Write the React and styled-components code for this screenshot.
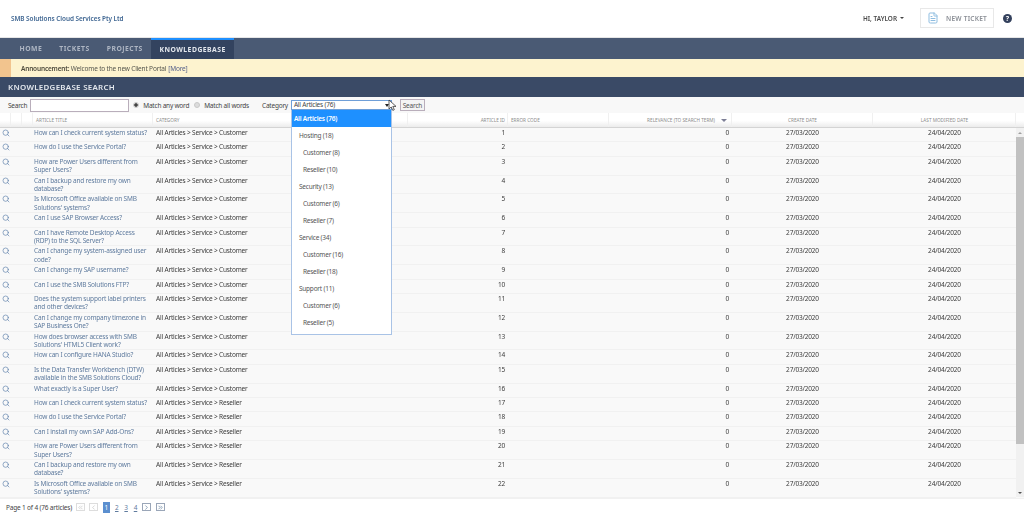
import React from "react";
import styled, { createGlobalStyle } from "styled-components";
import { Search as SearchIcon, FileText, ChevronLeft, ChevronRight, ChevronsLeft, ChevronsRight } from "lucide-react";

const FONT = `"Noto Sans", "Open Sans", sans-serif`;

const GlobalStyle = createGlobalStyle`
  html, body { margin: 0; padding: 0; height: 100%; overflow: hidden; background: #fff; }
  body { font-family: ${FONT}; font-size: 6.5px; color: #333; }
  * { box-sizing: border-box; }
`;

const articles = [
  ["How can I check current system status?", "Customer"],
  ["How do I use the Service Portal?", "Customer"],
  ["How are Power Users different from Super Users?", "Customer"],
  ["Can I backup and restore my own database?", "Customer"],
  ["Is Microsoft Office available on SMB Solutions' systems?", "Customer"],
  ["Can I use SAP Browser Access?", "Customer"],
  ["Can I have Remote Desktop Access (RDP) to the SQL Server?", "Customer"],
  ["Can I change my system-assigned user code?", "Customer"],
  ["Can I change my SAP username?", "Customer"],
  ["Can I use the SMB Solutions FTP?", "Customer"],
  ["Does the system support label printers and other devices?", "Customer"],
  ["Can I change my company timezone in SAP Business One?", "Customer"],
  ["How does browser access with SMB Solutions' HTML5 Client work?", "Customer"],
  ["How can I configure HANA Studio?", "Customer"],
  ["Is the Data Transfer Workbench (DTW) available in the SMB Solutions Cloud?", "Customer"],
  ["What exactly is a Super User?", "Customer"],
  ["How can I check current system status?", "Reseller"],
  ["How do I use the Service Portal?", "Reseller"],
  ["Can I install my own SAP Add-Ons?", "Reseller"],
  ["How are Power Users different from Super Users?", "Reseller"],
  ["Can I backup and restore my own database?", "Reseller"],
  ["Is Microsoft Office available on SMB Solutions' systems?", "Reseller"],
];

const categories = [
  ["All Articles (76)", 0, true],
  ["Hosting (18)", 1],
  ["Customer (8)", 2],
  ["Reseller (10)", 2],
  ["Security (13)", 1],
  ["Customer (6)", 2],
  ["Reseller (7)", 2],
  ["Service (34)", 1],
  ["Customer (16)", 2],
  ["Reseller (18)", 2],
  ["Support (11)", 1],
  ["Customer (6)", 2],
  ["Reseller (5)", 2],
];

const Page = styled.div`
  width: 1024px;
  height: 517px;
  display: flex;
  flex-direction: column;
  overflow: hidden;
  filter: blur(0.2px);
`;

const Header = styled.header`
  height: 38px;
  flex: none;
  display: flex;
  align-items: center;
  padding: 0 12px 1px 11px;
  border-bottom: 1px solid #e6e6e6;
`;

const Brand = styled.div`
  font-size: 6.4px;
  font-weight: 600;
  letter-spacing: -0.05px;
  color: #3f6692;
  margin-right: auto;
`;

const User = styled.div`
  font-size: 6.4px;
  font-weight: 600;
  color: #4a4a4a;
  display: flex;
  align-items: center;
  gap: 3px;
  margin-right: 16px;
  &::after {
    content: "";
    border: 2px solid transparent;
    border-top: 2px solid #444;
    margin-top: 2px;
  }
`;

const NewTicket = styled.div`
  width: 74px;
  height: 20px;
  border: 1px solid #e8e8e8;
  display: flex;
  align-items: center;
  padding-left: 6px;
  gap: 7px;
  font-size: 6.6px;
  letter-spacing: 0.2px;
  color: #8b8f96;
  font-weight: 600;
  svg { color: #8fbde0; }
`;

const Help = styled.div`
  width: 9px;
  height: 9px;
  margin-left: 9px;
  border-radius: 50%;
  background: #33405c;
  color: #fff;
  font-size: 7px;
  font-weight: 700;
  line-height: 9px;
  text-align: center;
`;

const Nav = styled.nav`
  height: 21px;
  flex: none;
  background: #4a5a74;
  display: flex;
  padding-left: 11px;
`;

const NavItem = styled.div`
  height: 21px;
  padding: ${(p) => (p.$active ? "0 8px" : "0 8.5px")};
  display: flex;
  align-items: center;
  font-size: 6.8px;
  font-weight: 700;
  letter-spacing: 0.5px;
  color: ${(p) => (p.$active ? "#e4e8ee" : "#aeb6c3")};
  background: ${(p) => (p.$active ? "#33435f" : "transparent")};
  border-top: ${(p) => (p.$active ? "2px solid #1e90ff" : "0")};
`;

const Announcement = styled.div`
  height: 18px;
  flex: none;
  background: #fdf3cf;
  border-left: 11px solid #f2c48e;
  display: flex;
  align-items: center;
  padding-left: 10px;
  font-size: 6.5px;
  letter-spacing: -0.18px;
  color: #55554d;
  b { font-weight: 600; color: #4d4a3c; }
  span { color: #55608a; margin-left: 2px; }
`;

const TitleBar = styled.div`
  height: 20px;
  flex: none;
  background: #3a4a66;
  color: #e3e7ed;
  font-size: 7.9px;
  font-weight: 600;
  letter-spacing: 0.3px;
  display: flex;
  align-items: center;
  padding-left: 8px;
`;

const SearchRow = styled.div`
  height: 16px;
  flex: none;
  background: #f8f8f8;
  display: flex;
  align-items: center;
  padding-left: 8px;
  font-size: 6.5px;
  letter-spacing: -0.22px;
  color: #444;
  position: relative;
  z-index: 2;
`;

const TextInput = styled.div`
  width: 99px;
  height: 13px;
  margin-left: 3px;
  background: #fff;
  border: 1px solid #b9aebb;
`;

const RadioLabel = styled.label`
  display: flex;
  align-items: center;
  gap: 4px;
  margin-left: ${(p) => p.$gap}px;
`;

const Radio = styled.span`
  width: 6px;
  height: 6px;
  border-radius: 50%;
  background: ${(p) => (p.$on ? "radial-gradient(circle, #444 0 1.5px, #ddd 2px)" : "#dcdcdc")};
  border: 1px solid #c8c8c8;
`;

const SelectWrap = styled.div`
  position: relative;
  margin-left: 3px;
`;

const Select = styled.div`
  width: 101px;
  height: 10px;
  background: #fff;
  border: 1px solid #6f9fd8;
  padding-left: 2px;
  line-height: 8px;
  display: flex;
  justify-content: space-between;
  &::after {
    content: "";
    border: 2.2px solid transparent;
    border-top: 3px solid #222;
    margin: 2.5px 2px 0 0;
  }
`;

const Menu = styled.ul`
  position: absolute;
  top: 10px;
  left: 0;
  width: 101px;
  height: 225px;
  margin: 0;
  padding: 0;
  list-style: none;
  background: #fff;
  border: 1px solid #a9c3e6;
  border-top: 0;
`;

const MenuItem = styled.li`
  height: 17px;
  line-height: 17px;
  padding-left: ${(p) => [2, 7, 11][p.$level]}px;
  background: ${(p) => (p.$selected ? "#1e90ff" : "transparent")};
  color: ${(p) => (p.$selected ? "#fff" : "#555")};
  font-weight: ${(p) => (p.$selected ? 600 : 400)};
`;

const SearchButton = styled.button`
  margin-left: 8px;
  width: 25px;
  height: 12px;
  padding: 0;
  font: 6.5px ${FONT};
  letter-spacing: -0.18px;
  color: #555;
  background: #f4f4f4;
  border: 1px solid #b9aebb;
`;

const Cursor = styled.svg`
  position: absolute;
  left: 388px;
  top: 99px;
  z-index: 3;
`;

const TableArea = styled.div`
  flex: 1;
  min-height: 0;
  display: flex;
  flex-direction: column;
  overflow: hidden;
  background: #f9f9f9;
`;

const HeaderRow = styled.div`
  height: 15px;
  flex: none;
  display: grid;
  grid-template-columns: 11px 11px 11px 120px 255px 100px 101px 123px 141px 143px 8px;
  background: linear-gradient(#fff 55%, #ececec);
  border-bottom: 1px solid #d4d4d4;
`;

const HeadCell = styled.div`
  font-size: 4.7px;
  color: #8b8b8b;
  display: flex;
  align-items: center;
  justify-content: ${(p) => p.$justify || "flex-start"};
  padding: 0 2px 0 3px;
  border-right: 1px solid #f0f0f0;
`;

const SortMark = styled.span`
  margin-left: 6px;
  margin-right: 2px;
  margin-top: 1px;
  border: 3px solid transparent;
  border-top: 3px solid #7d7f96;
  border-bottom: 0;
`;

const Body = styled.div`
  flex: 1;
  min-height: 0;
  display: flex;
  overflow: hidden;
`;

const Rows = styled.div`
  width: 1016px;
  height: 370px;
  overflow: hidden;
`;

const Row = styled.div`
  display: grid;
  grid-template-columns: 33px 120px 255px 100px 101px 123px 141px 143px;
  min-height: 14.4px;
  padding-top: 1px;
  border-bottom: 1px solid #f1f1f1;
  line-height: 8.4px;
  font-size: 6.5px;
  letter-spacing: -0.18px;
  color: #3b3b3b;
`;

const Cell = styled.div`
  text-align: ${(p) => p.$align || "left"};
  padding: 0 ${(p) => (p.$align === "right" ? "3px" : "0")} 0 ${(p) => (p.$pad ? p.$pad : 0)}px;
`;

const TitleCell = styled.div`
  color: #5f7b9e;
  padding: 0 2px 0 1px;
`;

const Magnifier = styled(SearchIcon)`
  display: block;
  margin: 0 0 0 2px;
  color: #5d80aa;
`;

const Scrollbar = styled.div`
  width: 8px;
  height: 369px;
  background: #f1f1f1;
  display: flex;
  flex-direction: column;
  align-items: center;
`;

const ArrowCell = styled.div`
  height: 9px;
  flex: none;
  display: flex;
  align-items: center;
  justify-content: center;
  &::after {
    content: "";
    border: 2px solid transparent;
    border-${(p) => (p.$up ? "bottom" : "top")}: 2px solid ${(p) => (p.$up ? "#a0a0a0" : "#505050")};
    ${(p) => (p.$up ? "border-top: 0;" : "border-bottom: 0;")}
  }
`;

const Thumb = styled.div`
  width: 8px;
  height: 307px;
  background: #c1c1c1;
`;

const Track = styled.div`
  flex: 1;
`;

const Footer = styled.footer`
  height: 19px;
  flex: none;
  background: #fff;
  display: flex;
  align-items: center;
  padding: 0 0 2px 6px;
  font-size: 6.5px;
  letter-spacing: -0.18px;
  color: #444;
  border-top: 1px solid #f1f1f1;
`;

const PageBox = styled.div`
  width: 9px;
  height: 8px;
  border: 1px solid ${(p) => (p.$dim ? "#ddd" : "#9aa6b8")};
  display: flex;
  align-items: center;
  justify-content: center;
  color: ${(p) => (p.$dim ? "#bbb" : "#4a6a8e")};
`;

const PageNumber = styled.div`
  width: ${(p) => (p.$active ? "7px" : "5px")};
  height: ${(p) => (p.$active ? "11px" : "auto")};
  background: ${(p) => (p.$active ? "#5b8fcf" : "transparent")};
  color: ${(p) => (p.$active ? "#fff" : "#5f7b9e")};
  text-align: center;
  text-decoration: ${(p) => (p.$active ? "none" : "underline")};
  line-height: 11px;
`;

const Pager = styled.div`
  display: flex;
  align-items: center;
  gap: 4.4px;
  margin-left: 4px;
`;

export default function App() {
  return (
    <Page>
      <GlobalStyle />
      <Header>
        <Brand>SMB Solutions Cloud Services Pty Ltd</Brand>
        <User>HI, TAYLOR</User>
        <NewTicket>
          <FileText size={12} />
          NEW TICKET
        </NewTicket>
        <Help>?</Help>
      </Header>
      <Nav>
        <NavItem>HOME</NavItem>
        <NavItem>TICKETS</NavItem>
        <NavItem>PROJECTS</NavItem>
        <NavItem $active>KNOWLEDGEBASE</NavItem>
      </Nav>
      <Announcement>
        <b>Announcement:</b>&nbsp;Welcome to the new Client Portal <span>[More]</span>
      </Announcement>
      <TitleBar>KNOWLEDGEBASE SEARCH</TitleBar>
      <SearchRow>
        Search
        <TextInput />
        <RadioLabel $gap={4}>
          <Radio $on />
          Match any word
        </RadioLabel>
        <RadioLabel $gap={5}>
          <Radio />
          Match all words
        </RadioLabel>
        <RadioLabel $gap={13}>Category</RadioLabel>
        <SelectWrap>
          <Select>All Articles (76)</Select>
          <Menu>
            {categories.map(([label, level, selected], i) => (
              <MenuItem key={i} $level={level} $selected={selected}>
                {label}
              </MenuItem>
            ))}
          </Menu>
        </SelectWrap>
        <SearchButton>Search</SearchButton>
      </SearchRow>
      <Cursor width="9" height="13" viewBox="0 0 9 13">
        <path d="M1 1v9l2.2-2 1.6 3.4 1.5-.7L4.8 7.4H8z" fill="#fff" stroke="#333" strokeWidth="0.8" />
      </Cursor>
      <TableArea>
        <HeaderRow>
          <HeadCell />
          <HeadCell />
          <HeadCell />
          <HeadCell>ARTICLE TITLE</HeadCell>
          <HeadCell>CATEGORY</HeadCell>
          <HeadCell $justify="flex-end">ARTICLE ID</HeadCell>
          <HeadCell>ERROR CODE</HeadCell>
          <HeadCell $justify="flex-end">
            RELEVANCE (TO SEARCH TERM)
            <SortMark />
          </HeadCell>
          <HeadCell $justify="center">CREATE DATE</HeadCell>
          <HeadCell $justify="center">LAST MODIFIED DATE</HeadCell>
        </HeaderRow>
        <Body>
          <Rows>
            {articles.map(([title, group], i) => (
              <Row key={i}>
                <Cell>
                  <Magnifier size={8} strokeWidth={2} />
                </Cell>
                <TitleCell>{title}</TitleCell>
                <Cell $pad={3}>All Articles &gt; Service &gt; {group}</Cell>
                <Cell $align="right">{i + 1}</Cell>
                <Cell />
                <Cell $align="right">0</Cell>
                <Cell $align="center">27/03/2020</Cell>
                <Cell $align="center">24/04/2020</Cell>
              </Row>
            ))}
          </Rows>
          <Scrollbar>
            <ArrowCell $up />
            <Thumb />
            <Track />
            <ArrowCell />
          </Scrollbar>
        </Body>
      </TableArea>
      <Footer>
        Page 1 of 4 (76 articles)
        <Pager>
          <PageBox $dim>
            <ChevronsLeft size={7} />
          </PageBox>
          <PageBox $dim>
            <ChevronLeft size={7} />
          </PageBox>
          <PageNumber $active>1</PageNumber>
          <PageNumber>2</PageNumber>
          <PageNumber>3</PageNumber>
          <PageNumber>4</PageNumber>
          <PageBox>
            <ChevronRight size={7} />
          </PageBox>
          <PageBox>
            <ChevronsRight size={7} />
          </PageBox>
        </Pager>
      </Footer>
    </Page>
  );
}
